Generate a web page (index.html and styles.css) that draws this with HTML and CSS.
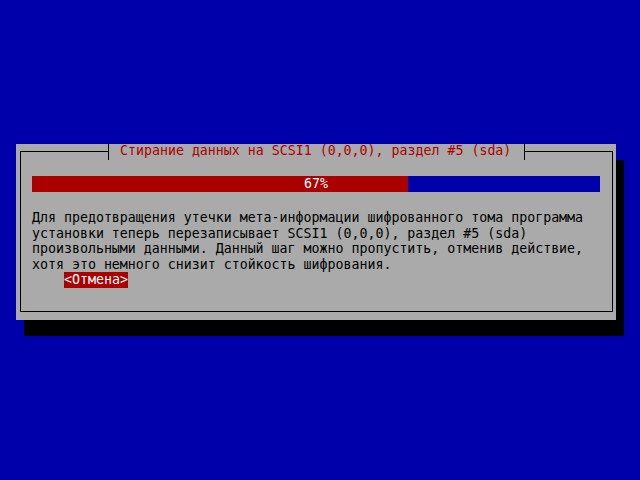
FILE: index.html
```html
<!DOCTYPE html>
<html lang="ru">
<head>
<meta charset="utf-8">
<link rel="stylesheet" href="styles.css">
</head>
<body>
<div class="screen">
  <div class="dialog">
    <div class="frame">
      <div class="title">Стирание данных на SCSI1 (0,0,0), раздел #5 (sda)</div>
      <div class="progress">
        <div class="fill" style="width:376px"></div>
        <div class="pct">67%</div>
      </div>
      <p class="msg">Для предотвращения утечки мета-информации шифрованного тома программа
установки теперь перезаписывает SCSI1 (0,0,0), раздел #5 (sda)
произвольными данными. Данный шаг можно пропустить, отменив действие,
хотя это немного снизит стойкость шифрования.</p>
      <div class="buttons"><span class="btn">&lt;Отмена&gt;</span></div>
    </div>
  </div>
</div>
</body>
</html>
```
FILE: styles.css
```css
html, body {
  margin: 0;
  padding: 0;
  background: #0000aa;
}
.screen {
  width: 640px;
  height: 480px;
  box-sizing: border-box;
  padding: 144px 0 0 16px;
  font-family: "DejaVu Sans Mono", monospace;
  font-size: 13.288px;
  line-height: 16px;
  color: #000;
}
.dialog {
  width: 600px;
  height: 176px;
  box-sizing: border-box;
  padding: 7px 3px 8px 4px;
  background: #aaaaaa;
  box-shadow: 8px 16px 0 #000;
}
.frame {
  position: relative;
  height: 100%;
  box-sizing: border-box;
  border: 1px solid #000;
  padding-top: 24px;
}
.title {
  position: absolute;
  left: 87px;
  top: -8px;
  width: 417px;
  height: 16px;
  box-sizing: border-box;
  border-left: 1px solid #000;
  border-right: 1px solid #000;
  padding-left: 11px;
  background: #aaaaaa;
  color: #aa0000;
  line-height: 13px;
  white-space: pre;
}
.progress {
  display: grid;
  grid-template-rows: 16px;
  margin-left: 11px;
  width: 568px;
  height: 16px;
  background: #0000aa;
}
.fill {
  grid-area: 1 / 1;
  justify-self: start;
  height: 16px;
  background: #aa0000;
}
.pct {
  grid-area: 1 / 1;
  text-align: center;
  color: #ffffff;
}
.msg {
  margin: 18px 0 0 11px;
  line-height: 15.6px;
  white-space: pre;
}
.buttons {
  margin-left: 43px;
  height: 16px;
}
.btn {
  display: inline-block;
  vertical-align: top;
  height: 16px;
  background: #aa0000;
  color: #ffffff;
  white-space: pre;
}
```
